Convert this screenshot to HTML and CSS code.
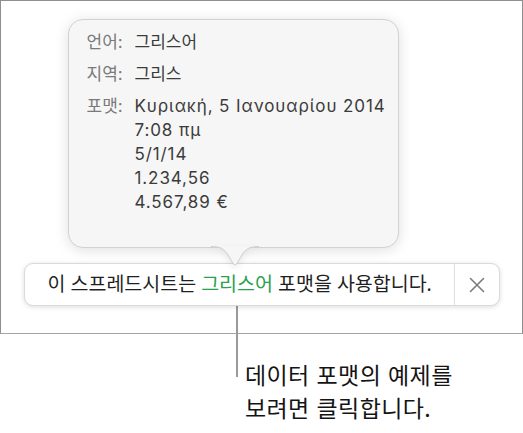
FILE: index.html
```html
<!DOCTYPE html>
<html lang="ko">
<head>
<meta charset="utf-8">
<link rel="stylesheet" href="styles.css">
</head>
<body>
<div class="frame">
  <div class="popover">
    <div class="rows">
      <div class="row"><span class="label">언어:</span><span class="value">그리스어</span></div>
      <div class="row"><span class="label">지역:</span><span class="value">그리스</span></div>
      <div class="row"><span class="label">포맷:</span>
        <span class="value lines">
          <span>Κυριακή, 5 Ιανουαρίου 2014</span>
          <span>7:08 πμ</span>
          <span>5/1/14</span>
          <span>1.234,56</span>
          <span>4.567,89 €</span>
        </span>
      </div>
    </div>
    <svg class="arrow" width="48" height="22" viewBox="0 0 48 22">
      <path d="M0 0 C9 0 13 2.5 16.5 7.5 L22.2 17.2 Q24 20 25.8 17.2 L31.5 7.5 C35 2.5 39 0 48 0 Z" fill="#f6f6f6"/>
      <path d="M0 0.5 C9 0.5 13 3 16.5 8 L22.2 17.7 Q24 20.5 25.8 17.7 L31.5 8 C35 3 39 0.5 48 0.5" fill="none" stroke="#cfcfcf" stroke-width="1"/>
    </svg>
  </div>
  <div class="banner">
    <div class="message">이 스프레드시트는 <span class="accent">그리스어</span> 포맷을 사용합니다.</div>
    <div class="close">
      <svg width="16" height="16" viewBox="0 0 16 16"><path d="M1.5 1.5 L14.5 14.5 M14.5 1.5 L1.5 14.5" stroke="#7b7b7b" stroke-width="1.6" stroke-linecap="round" fill="none"/></svg>
    </div>
  </div>
</div>
<div class="callout">
  <div class="callout-text">데이터 포맷의 예제를<br>보려면 클릭합니다.</div>
</div>
</body>
</html>
```

FILE: styles.css
```css
html, body {
  margin: 0;
  padding: 0;
  background: #ffffff;
}
body {
  width: 523px;
  height: 433px;
  overflow: hidden;
  font-family: "Noto Sans", "Noto Sans CJK KR", sans-serif;
}
.frame {
  box-sizing: border-box;
  width: 523px;
  height: 334px;
  border: 1.5px solid #8f8f8f;
  border-bottom-color: #a5a5a5;
  display: flex;
  flex-direction: column;
  align-items: flex-start;
  padding-top: 18px;
}
.popover {
  position: relative;
  z-index: 2;
  box-sizing: border-box;
  width: 331px;
  height: 229px;
  margin-left: 66.5px;
  background: #f6f6f6;
  border: 1px solid #d2d2d2;
  border-radius: 15px;
  box-shadow: 0 2px 14px rgba(0, 0, 0, 0.13);
  padding: 10px 0 0 18px;
}
.rows {
  display: flex;
  flex-direction: column;
  gap: 8px;
}
.row {
  display: flex;
  font-size: 17px;
  line-height: 24px;
  font-family: "Inter", "Noto Sans CJK KR", sans-serif;
}
.label {
  width: 48px;
  flex: none;
  color: #7a7a7a;
}
.value {
  color: #3b3b3b;
}
.lines {
  display: flex;
  flex-direction: column;
  letter-spacing: 0.9px;
}
.arrow {
  position: absolute;
  left: 142px;
  top: 100%;
  margin-top: -1px;
  filter: drop-shadow(0 3px 3px rgba(0, 0, 0, 0.08));
}
.banner {
  position: relative;
  z-index: 1;
  box-sizing: border-box;
  width: 476px;
  height: 43px;
  margin-top: 15px;
  margin-left: 22.5px;
  background: #ffffff;
  border: 1px solid #dadada;
  border-radius: 9px;
  box-shadow: 0 1px 5px rgba(0, 0, 0, 0.14);
  display: flex;
  align-items: stretch;
}
.message {
  flex: 1;
  padding-left: 23px;
  font-size: 19.5px;
  line-height: 40px;
  color: #1f1f1f;
  white-space: nowrap;
}
.accent {
  color: #2aa14c;
}
.close {
  width: 44px;
  flex: none;
  border-left: 1px solid #dedede;
  display: flex;
  align-items: center;
  justify-content: center;
}
.callout {
  position: relative;
  margin-left: 236px;
  margin-top: 24px;
}
.callout::before {
  content: "";
  position: absolute;
  left: 0;
  top: -54px;
  width: 2px;
  height: 73px;
  background: #9a9a9a;
}
.callout-text {
  padding-left: 9px;
  font-size: 23px;
  letter-spacing: 0.4px;
  line-height: 33px;
  color: #141414;
  font-family: "Noto Sans CJK KR", sans-serif;
}
```
